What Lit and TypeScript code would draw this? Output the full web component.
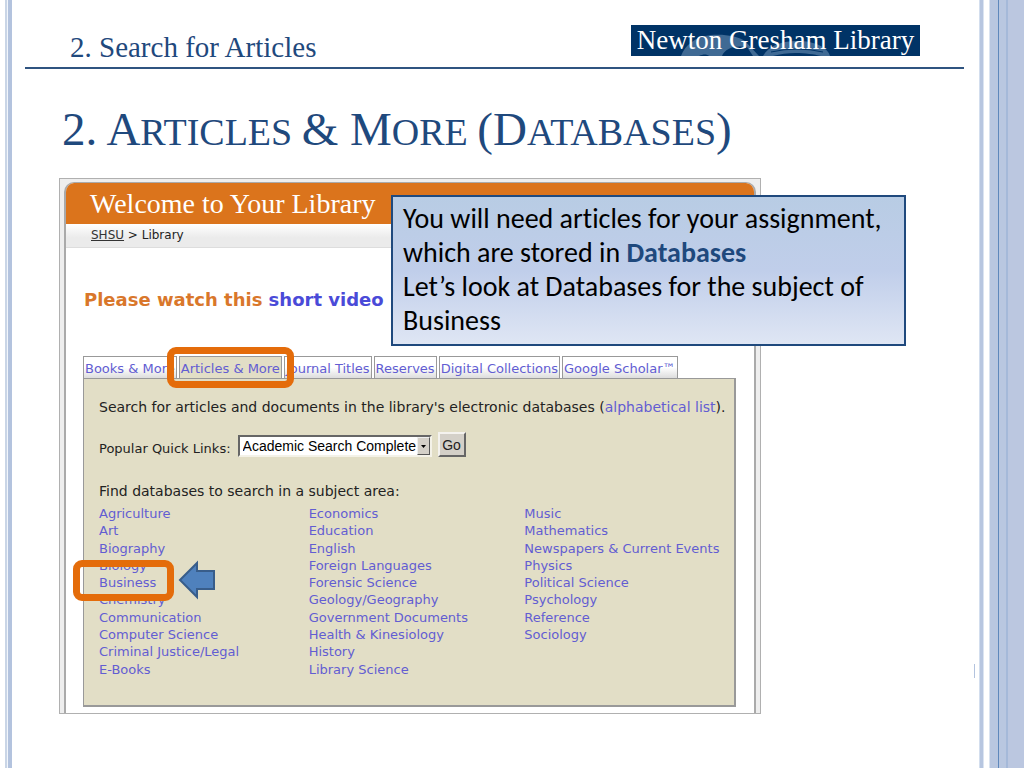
import { LitElement, html, css } from "lit";
import { customElement, property } from "lit/decorators.js";

const TABS = [
  "Books & More",
  "Articles & More",
  "Journal Titles",
  "Reserves",
  "Digital Collections",
  "Google Scholar™",
];

const SUBJECTS = [
  [
    "Agriculture", "Art", "Biography", "Biology", "Business", "Chemistry",
    "Communication", "Computer Science", "Criminal Justice/Legal", "E-Books",
  ],
  [
    "Economics", "Education", "English", "Foreign Languages",
    "Forensic Science", "Geology/Geography", "Government Documents",
    "Health & Kinesiology", "History", "Library Science",
  ],
  [
    "Music", "Mathematics", "Newspapers & Current Events", "Physics",
    "Political Science", "Psychology", "Reference", "Sociology",
  ],
];

/** Banner with the library's name over a pale swoosh. */
@customElement("library-logo")
class LibraryLogo extends LitElement {
  static styles = css`
    :host {
      display: block;
      position: relative;
      overflow: hidden;
      background: #003366;
      color: #fff;
      width: 289px;
      height: 31px;
      font: 27px/30px "Liberation Serif", serif;
      text-align: center;
      white-space: nowrap;
    }
    .swoosh {
      position: absolute;
      inset: 0;
      width: 100%;
      height: 100%;
    }
    .name {
      position: relative;
    }
  `;
  render() {
    return html`
      <svg class="swoosh" viewBox="0 0 289 31" aria-hidden="true">
        <path
          fill="#3f6a94"
          d="M50 31 C54 20 64 12 80 10 C94 9 106 11 114 16 L128 31 L122 31 L116 22 C104 20 94 23 91 31 L78 31 C76 29 72 29 68 31 Z"
        />
        <path
          fill="#3f6a94"
          d="M132 31 C138 20 152 15 170 16 C186 17 197 23 199 31 L190 31 C178 28 158 26 142 31 Z"
        />
        <path d="M140 27 Q166 21 192 27" fill="none" stroke="#003366" />
      </svg>
      <span class="name">Newton Gresham Library</span>
    `;
  }
}

/** The library's search page: banner, tabs, quick links, subject lists. */
@customElement("library-page")
class LibraryPage extends LitElement {
  @property() tab = "Articles & More";
  @property() subject = "Business";

  static styles = css`
    :host {
      display: block;
      box-sizing: border-box;
      padding: 3px 4px 0;
      background: #eee;
      border: 1px solid #b0b0b0;
      font: 13px/17px "DejaVu Sans", sans-serif;
      color: #222;
    }
    * {
      box-sizing: border-box;
    }
    a {
      color: #625dd2;
      text-decoration: none;
    }
    .sheet {
      background: #fff;
      border: 2px solid #aaa;
      border-width: 1px 2px 0;
      border-radius: 10px 10px 0 0;
      overflow: hidden;
    }
    .banner {
      margin: 0;
      padding: 0 24px;
      background: #db741c;
      color: #fff;
      font: 28px/41px "Liberation Serif", serif;
    }
    .crumbs {
      padding: 0 25px;
      height: 24px;
      background: linear-gradient(#fff, #ebebeb 60%);
      border-bottom: 1px solid #ddd;
      font-size: 12px;
      line-height: 23px;
    }
    .crumbs a {
      color: #333;
      text-decoration: underline;
    }
    .notice {
      margin: 0;
      padding: 40px 18px 44px;
      font-size: 18px;
      line-height: 24px;
      font-weight: bold;
      color: #d9772b;
    }
    .notice a {
      color: #4a4ad8;
    }
    .tabs {
      display: flex;
      gap: 2px;
      margin: 0 17px;
      position: relative;
    }
    .tab {
      position: relative;
      height: 22px;
      padding: 0 1px;
      border: 1px solid #999;
      border-bottom: 0;
      background: linear-gradient(#fff 50%, #ddd);
      line-height: 24px;
      white-space: nowrap;
    }
    .tab.on {
      background: #e2dec6;
    }
    .ring {
      position: absolute;
      z-index: 1;
      border: 7px solid #e46c0a;
      border-radius: 9px;
      pointer-events: none;
    }
    .tab .ring {
      inset: -10px -13px -10px -13px;
    }
    .item .ring {
      inset: -14px -18px -10px -26px;
    }
    .pane {
      margin: 0 18px 6px 17px;
      padding: 20px 4px 27px 15px;
      background: #e2dec6;
      border: 1px solid #999;
      border-width: 1px 2px 2px 1px;
    }
    .line {
      margin: 0;
      font-size: 14px;
    }
    .quick {
      display: flex;
      align-items: flex-start;
      margin: 16px 0 18px;
    }
    .quick label {
      line-height: 33px;
      margin-right: 7px;
    }
    .pick {
      position: relative;
      margin-top: 3px;
      margin-right: 6px;
    }
    .pick select {
      appearance: none;
      display: block;
      width: 194px;
      height: 22px;
      padding: 0 14px 0 3px;
      border: 2px solid;
      border-color: #666 #f4f2e8 #f4f2e8 #666;
      border-radius: 0;
      background: #fff;
      color: #000;
      font: 14px/18px "Liberation Sans", sans-serif;
    }
    .drop {
      position: absolute;
      top: 2px;
      right: 2px;
      width: 13px;
      height: 18px;
      background: #d4d0c8;
      border: 1px solid;
      border-color: #eee #555 #555 #eee;
      pointer-events: none;
    }
    .go {
      width: 28px;
      height: 25px;
      padding: 0;
      border: 2px solid;
      border-color: #f4f2ee #666 #666 #f4f2ee;
      border-radius: 0;
      background: #d4d0c8;
      color: #222;
      font: 14px/20px "Liberation Sans", sans-serif;
    }
    .subjects {
      display: grid;
      grid-template-columns: 210fr 216fr 206fr;
      margin-top: 5px;
    }
    .list {
      display: grid;
      grid-template-rows: repeat(10, 1fr);
      height: 173px;
      margin: 0;
      padding: 0;
      list-style: none;
      white-space: nowrap;
    }
    .item {
      position: relative;
      justify-self: start;
    }
    .arrow {
      position: absolute;
      left: 79px;
      top: -14px;
      width: 38px;
      height: 40px;
    }
  `;

  render() {
    return html`
      <div class="sheet">
        <h2 class="banner">Welcome to Your Library</h2>
        <nav class="crumbs"><a href="#">SHSU</a> &gt; Library</nav>
        <p class="notice">Please watch this <a href="#">short video</a></p>
        <nav class="tabs">
          ${TABS.map(
            (t) => html`<div class="tab ${t === this.tab ? "on" : ""}">
              <a href="#">${t}</a>${t === this.tab
                ? html`<span class="ring"></span>`
                : ""}
            </div>`
          )}
        </nav>
        <section class="pane">
          <p class="line">
            Search for articles and documents in the library's electronic
            databases (<a href="#">alphabetical list</a>).
          </p>
          <div class="quick">
            <label for="quick">Popular Quick Links:</label>
            <div class="pick">
              <select id="quick">
                <option>Academic Search Complete</option>
              </select>
              <svg class="drop" viewBox="0 0 11 16" aria-hidden="true">
                <path d="M3 7 H8 L5.5 10 Z" />
              </svg>
            </div>
            <button class="go" type="button">Go</button>
          </div>
          <p class="line">Find databases to search in a subject area:</p>
          <div class="subjects">
            ${SUBJECTS.map(
              (col) => html`<ul class="list">
                ${col.map(
                  (s) => html`<li class="item">
                    <a href="#">${s}</a>${s === this.subject
                      ? html`<span class="ring"></span>
                          <svg class="arrow" viewBox="0 0 38 40" aria-hidden="true">
                            <path
                              d="M2 20 L19 3 V11 H36 V29 H19 V37 Z"
                              fill="#4f81bd"
                              stroke="#385d8a"
                              stroke-width="2"
                            />
                          </svg>`
                      : ""}
                  </li>`
                )}
              </ul>`
            )}
          </div>
        </section>
      </div>
    `;
  }
}

@customElement("app-root")
class AppRoot extends LitElement {
  static styles = css`
    :host {
      display: grid;
      grid-template-columns: 12px 1fr 45px;
      min-height: 100vh;
      background: #fff;
      color: #1f497d;
      font-family: "Liberation Serif", serif;
    }
    * {
      box-sizing: border-box;
    }
    .rail-left {
      background: linear-gradient(
        to right,
        #fff 5px, #c9d5e6 5px 7px, #f1f5fb 7px 8px, #b3c3de 8px
      );
    }
    .rail-right {
      background: linear-gradient(
        to right,
        #d3deee 1px, #b7c6e0 1px 4px, #dbe4f1 4px 5px, #fff 5px 10px,
        #dbe4f1 10px 11px, #b9c7e0 11px 19px, #5f88bb 19px 20px,
        #b9c7e0 20px 27px, #a5b9d9 27px 29px, #bbc7e0 29px
      );
    }
    .slide {
      position: relative;
      padding: 0 15px 0 13px;
    }
    .top {
      display: flex;
      justify-content: space-between;
      align-items: flex-start;
      height: 69px;
      padding: 25px 44px 0 45px;
      border-bottom: 2px solid #2f5480;
    }
    .chapter {
      margin: 0;
      font-size: 29px;
      line-height: 44px;
    }
    .title {
      margin: 35px 0 18px 37px;
      font-size: 38px;
      line-height: 56px;
      font-weight: normal;
      text-transform: uppercase;
      white-space: nowrap;
    }
    .cap {
      font-size: 47px;
      line-height: 46px;
    }
    .figure {
      position: relative;
      width: 702px;
      margin-left: 34px;
    }
    .callout {
      position: absolute;
      z-index: 2;
      left: 332px;
      top: 17px;
      width: 515px;
      padding: 5px 10px 6px;
      border: 2px solid #1f497d;
      background: linear-gradient(#b8cce4, #c0ceea 50%, #dfe6f4);
      color: #000;
      font: 28px/34px Carlito, Lato, sans-serif;
      font-variant-ligatures: none;
    }
    .callout p {
      margin: 0;
    }
    .callout b {
      color: #1f497d;
    }
    .tick {
      position: absolute;
      right: 4px;
      top: 664px;
      width: 1px;
      height: 14px;
      background: #b3c3de;
    }
  `;

  render() {
    return html`
      <div class="rail-left"></div>
      <main class="slide">
        <header class="top">
          <p class="chapter">2. Search for Articles</p>
          <library-logo></library-logo>
        </header>
        <h1 class="title">
          <span class="cap">2. A</span>rticles <span class="cap">&amp; M</span>ore
          <span class="cap">(D</span>atabases<span class="cap">)</span>
        </h1>
        <div class="figure">
          <library-page></library-page>
          <aside class="callout">
            <p>
              You will need articles for your assignment,<br />which are stored
              in <b>Databases</b>
            </p>
            <p>Let’s look at Databases for the subject of Business</p>
          </aside>
        </div>
        <span class="tick"></span>
      </main>
      <div class="rail-right"></div>
    `;
  }
}
